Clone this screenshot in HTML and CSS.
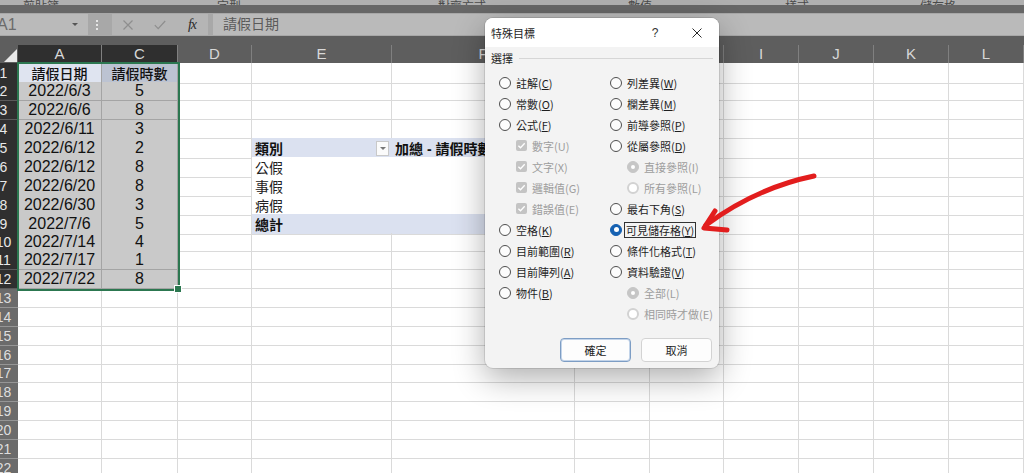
FILE: index.html
```html
<!DOCTYPE html>
<html lang="zh-Hant">
<head>
<meta charset="utf-8">
<title>特殊目標</title>
<link rel="stylesheet" href="styles.css">
</head>
<body>
<div class="app">
  <div class="ribbon-tail">
    <span></span><span>剪貼簿</span><span>字型</span><span>對齊方式</span><span>數值</span><span>樣式</span><span>儲存格</span>
  </div>
  <div class="ribbon-dark"></div>
  <div class="fbar">
    <div class="namebox"><span class="ref">A1</span><span class="dd"></span></div>
    <div class="grip"><i></i><i></i><i></i></div>
    <div class="fbtns">
      <span><svg width="10" height="10" viewBox="0 0 10 10"><path d="M0.5 0.5L9.5 9.5M9.5 0.5L0.5 9.5" stroke="#8e8e8e" stroke-width="1.2" fill="none"/></svg></span>
      <span><svg width="12" height="10" viewBox="0 0 12 10"><path d="M0.8 5.2L4.2 8.6L11.2 1" stroke="#8e8e8e" stroke-width="1.2" fill="none"/></svg></span>
      <span class="fx">fx</span>
    </div>
    <div class="finput">請假日期</div>
  </div>
  <div class="colhead">
    <div class="h corner"><div class="tri"></div></div>
    <div class="h hs">A</div><div class="h hs">C</div><div class="h">D</div><div class="h">E</div><div class="h">F</div><div class="h">G</div><div class="h">H</div><div class="h">I</div><div class="h">J</div><div class="h">K</div><div class="h">L</div>
  </div>
  <div class="sheet">
    <div class="row"><div class="rh rs">1</div><div class="c a1">請假日期</div><div class="c c1">請假時數</div><div class="c"></div><div class="c"></div><div class="c"></div><div class="c"></div><div class="c"></div><div class="c"></div><div class="c"></div><div class="c"></div><div class="c"></div></div>
    <div class="row"><div class="rh rs">2</div><div class="c sel num">2022/6/3</div><div class="c sel num">5</div><div class="c"></div><div class="c"></div><div class="c"></div><div class="c"></div><div class="c"></div><div class="c"></div><div class="c"></div><div class="c"></div><div class="c"></div></div>
    <div class="row"><div class="rh rs">3</div><div class="c sel num">2022/6/6</div><div class="c sel num">8</div><div class="c"></div><div class="c"></div><div class="c"></div><div class="c"></div><div class="c"></div><div class="c"></div><div class="c"></div><div class="c"></div><div class="c"></div></div>
    <div class="row"><div class="rh rs">4</div><div class="c sel num">2022/6/11</div><div class="c sel num">3</div><div class="c"></div><div class="c"></div><div class="c"></div><div class="c"></div><div class="c"></div><div class="c"></div><div class="c"></div><div class="c"></div><div class="c"></div></div>
    <div class="row"><div class="rh rs">5</div><div class="c sel num">2022/6/12</div><div class="c sel num">2</div><div class="c"></div><div class="c pvh pvh-e"><span>類別</span><span class="ddbtn"><span class="ddtri"></span></span></div><div class="c pvh">加總 - 請假時數</div><div class="c"></div><div class="c"></div><div class="c"></div><div class="c"></div><div class="c"></div><div class="c"></div></div>
    <div class="row"><div class="rh rs">6</div><div class="c sel num">2022/6/12</div><div class="c sel num">8</div><div class="c"></div><div class="c pv">公假</div><div class="c pv"></div><div class="c"></div><div class="c"></div><div class="c"></div><div class="c"></div><div class="c"></div><div class="c"></div></div>
    <div class="row"><div class="rh rs">7</div><div class="c sel num">2022/6/20</div><div class="c sel num">8</div><div class="c"></div><div class="c pv">事假</div><div class="c pv"></div><div class="c"></div><div class="c"></div><div class="c"></div><div class="c"></div><div class="c"></div><div class="c"></div></div>
    <div class="row"><div class="rh rs">8</div><div class="c sel num">2022/6/30</div><div class="c sel num">3</div><div class="c"></div><div class="c pv pv-last">病假</div><div class="c pv pv-last"></div><div class="c"></div><div class="c"></div><div class="c"></div><div class="c"></div><div class="c"></div><div class="c"></div></div>
    <div class="row"><div class="rh rs">9</div><div class="c sel num">2022/7/6</div><div class="c sel num">5</div><div class="c"></div><div class="c pvt">總計</div><div class="c pvt"></div><div class="c"></div><div class="c"></div><div class="c"></div><div class="c"></div><div class="c"></div><div class="c"></div></div>
    <div class="row"><div class="rh rs">10</div><div class="c sel num">2022/7/14</div><div class="c sel num">4</div><div class="c"></div><div class="c"></div><div class="c"></div><div class="c"></div><div class="c"></div><div class="c"></div><div class="c"></div><div class="c"></div><div class="c"></div></div>
    <div class="row"><div class="rh rs">11</div><div class="c sel num">2022/7/17</div><div class="c sel num">1</div><div class="c"></div><div class="c"></div><div class="c"></div><div class="c"></div><div class="c"></div><div class="c"></div><div class="c"></div><div class="c"></div><div class="c"></div></div>
    <div class="row"><div class="rh rs">12</div><div class="c sel num">2022/7/22</div><div class="c sel num">8</div><div class="c"></div><div class="c"></div><div class="c"></div><div class="c"></div><div class="c"></div><div class="c"></div><div class="c"></div><div class="c"></div><div class="c"></div></div>
    <div class="row"><div class="rh">13</div><div class="c"></div><div class="c"></div><div class="c"></div><div class="c"></div><div class="c"></div><div class="c"></div><div class="c"></div><div class="c"></div><div class="c"></div><div class="c"></div><div class="c"></div></div>
    <div class="row"><div class="rh">14</div><div class="c"></div><div class="c"></div><div class="c"></div><div class="c"></div><div class="c"></div><div class="c"></div><div class="c"></div><div class="c"></div><div class="c"></div><div class="c"></div><div class="c"></div></div>
    <div class="row"><div class="rh">15</div><div class="c"></div><div class="c"></div><div class="c"></div><div class="c"></div><div class="c"></div><div class="c"></div><div class="c"></div><div class="c"></div><div class="c"></div><div class="c"></div><div class="c"></div></div>
    <div class="row"><div class="rh">16</div><div class="c"></div><div class="c"></div><div class="c"></div><div class="c"></div><div class="c"></div><div class="c"></div><div class="c"></div><div class="c"></div><div class="c"></div><div class="c"></div><div class="c"></div></div>
    <div class="row"><div class="rh">17</div><div class="c"></div><div class="c"></div><div class="c"></div><div class="c"></div><div class="c"></div><div class="c"></div><div class="c"></div><div class="c"></div><div class="c"></div><div class="c"></div><div class="c"></div></div>
    <div class="row"><div class="rh">18</div><div class="c"></div><div class="c"></div><div class="c"></div><div class="c"></div><div class="c"></div><div class="c"></div><div class="c"></div><div class="c"></div><div class="c"></div><div class="c"></div><div class="c"></div></div>
    <div class="row"><div class="rh">19</div><div class="c"></div><div class="c"></div><div class="c"></div><div class="c"></div><div class="c"></div><div class="c"></div><div class="c"></div><div class="c"></div><div class="c"></div><div class="c"></div><div class="c"></div></div>
    <div class="row"><div class="rh">20</div><div class="c"></div><div class="c"></div><div class="c"></div><div class="c"></div><div class="c"></div><div class="c"></div><div class="c"></div><div class="c"></div><div class="c"></div><div class="c"></div><div class="c"></div></div>
    <div class="row"><div class="rh">21</div><div class="c"></div><div class="c"></div><div class="c"></div><div class="c"></div><div class="c"></div><div class="c"></div><div class="c"></div><div class="c"></div><div class="c"></div><div class="c"></div><div class="c"></div></div>
    <div class="row"><div class="rh">22</div><div class="c"></div><div class="c"></div><div class="c"></div><div class="c"></div><div class="c"></div><div class="c"></div><div class="c"></div><div class="c"></div><div class="c"></div><div class="c"></div><div class="c"></div></div>
  </div>
</div>

<div class="selection"></div>

<div class="dialog">
  <div class="dlg-title">
    <span class="t">特殊目標</span>
    <span class="help">?</span>
    <span class="close"><svg width="10" height="10" viewBox="0 0 10 10"><path d="M0.5 0.5L9.5 9.5M9.5 0.5L0.5 9.5" stroke="#2a2a2a" stroke-width="1" fill="none"/></svg></span>
  </div>
  <div class="legend"><span>選擇</span><span class="line"></span></div>
  <div class="opts">
    <div class="opt"><span class="radio"></span><span>註解(<u>C</u>)</span></div>
    <div class="opt"><span class="radio"></span><span>列差異(<u>W</u>)</span></div>

    <div class="opt"><span class="radio"></span><span>常數(<u>O</u>)</span></div>
    <div class="opt"><span class="radio"></span><span>欄差異(<u>M</u>)</span></div>

    <div class="opt"><span class="radio"></span><span>公式(<u>F</u>)</span></div>
    <div class="opt"><span class="radio"></span><span>前導參照(<u>P</u>)</span></div>

    <div class="opt ind dis"><span class="chk"><svg width="11" height="11" viewBox="0 0 11 11"><path d="M2.4 5.8L4.5 7.8L8.7 3.3" fill="none" stroke="#fff" stroke-width="1.3"/></svg></span><span>數字(U)</span></div>
    <div class="opt"><span class="radio"></span><span>從屬參照(<u>D</u>)</span></div>

    <div class="opt ind dis"><span class="chk"><svg width="11" height="11" viewBox="0 0 11 11"><path d="M2.4 5.8L4.5 7.8L8.7 3.3" fill="none" stroke="#fff" stroke-width="1.3"/></svg></span><span>文字(X)</span></div>
    <div class="opt ind dis"><span class="radio don"></span><span>直接參照(I)</span></div>

    <div class="opt ind dis"><span class="chk"><svg width="11" height="11" viewBox="0 0 11 11"><path d="M2.4 5.8L4.5 7.8L8.7 3.3" fill="none" stroke="#fff" stroke-width="1.3"/></svg></span><span>邏輯值(G)</span></div>
    <div class="opt ind dis"><span class="radio doff"></span><span>所有參照(L)</span></div>

    <div class="opt ind dis"><span class="chk"><svg width="11" height="11" viewBox="0 0 11 11"><path d="M2.4 5.8L4.5 7.8L8.7 3.3" fill="none" stroke="#fff" stroke-width="1.3"/></svg></span><span>錯誤值(E)</span></div>
    <div class="opt"><span class="radio"></span><span>最右下角(<u>S</u>)</span></div>

    <div class="opt"><span class="radio"></span><span>空格(<u>K</u>)</span></div>
    <div class="opt"><span class="radio on"></span><span class="focus">可見儲存格(<u>Y</u>)</span></div>

    <div class="opt"><span class="radio"></span><span>目前範圍(<u>R</u>)</span></div>
    <div class="opt"><span class="radio"></span><span>條件化格式(<u>T</u>)</span></div>

    <div class="opt"><span class="radio"></span><span>目前陣列(<u>A</u>)</span></div>
    <div class="opt"><span class="radio"></span><span>資料驗證(<u>V</u>)</span></div>

    <div class="opt"><span class="radio"></span><span>物件(<u>B</u>)</span></div>
    <div class="opt ind dis"><span class="radio don"></span><span>全部(L)</span></div>

    <div class="opt"></div>
    <div class="opt ind dis"><span class="radio doff"></span><span>相同時才做(E)</span></div>
  </div>
  <div class="btns">
    <div class="btn def">確定</div>
    <div class="btn">取消</div>
  </div>
</div>

<svg class="annot" width="1024" height="473" viewBox="0 0 1024 473">
  <path d="M814 176 Q756 188 706 225" fill="none" stroke="#e21d1d" stroke-width="5" stroke-linecap="round"/>
  <path d="M715 211 L704 228 L727 230" fill="none" stroke="#e21d1d" stroke-width="5" stroke-linecap="round" stroke-linejoin="round"/>
</svg>
</body>
</html>
```
FILE: styles.css
```css
* { box-sizing: border-box; }
html, body { margin: 0; padding: 0; }
body {
  width: 1024px;
  height: 473px;
  overflow: hidden;
  position: relative;
  background: #fff;
  font-family: "Liberation Sans", "Noto Sans CJK TC", sans-serif;
  color: #111;
}
.app { margin-left: -11px; width: 1035px; }

/* ribbon remnants */
.ribbon-tail {
  height: 5px;
  background: #b0b0b0;
  overflow: hidden;
  display: grid;
  grid-template-columns: 34px 194px 221px 190px 157px 135px 1fr;
  align-items: end;
}
.ribbon-tail span {
  display: block;
  font: 12px/12px "Noto Sans CJK TC", sans-serif;
  color: #4a4a4a;
  margin-bottom: -5px;
  white-space: nowrap;
}
.ribbon-dark { height: 8px; background: #676767; }

/* formula bar */
.fbar {
  height: 23px;
  background: #a8a8a8;
  display: flex;
  align-items: flex-start;
  padding-top: 1px;
}
.namebox {
  width: 99px;
  height: 21px;
  background: #bababa;
  display: flex;
  align-items: center;
  justify-content: space-between;
  padding: 0 10px 0 8px;
}
.namebox .ref { font-size: 16px; color: #6b6b6b; }
.namebox .dd {
  width: 0; height: 0;
  border-left: 3px solid transparent;
  border-right: 3px solid transparent;
  border-top: 3px solid #555;
}
.grip {
  width: 24px;
  height: 21px;
  display: flex;
  flex-direction: column;
  align-items: flex-start;
  justify-content: center;
  gap: 2px;
  padding-left: 8px;
}
.grip i { display: block; width: 2px; height: 2px; background: #e6e6e6; }
.fbtns {
  width: 96px;
  height: 21px;
  background: #b5b5b5;
  display: grid;
  grid-template-columns: 32px 32px 32px;
  align-items: center;
  justify-items: center;
}
.fbtns span { display: flex; align-items: center; }
.fbtns .fx {
  font-family: "Liberation Serif", serif;
  font-style: italic;
  font-size: 14px;
  color: #2a2a2a;
  letter-spacing: -1px;
}
.finput {
  flex: 1;
  height: 21px;
  margin-left: 5px;
  background: #bababa;
  padding-left: 10px;
  font-size: 14px;
  line-height: 21px;
  color: #5a5a5a;
}

/* column headers */
.colhead {
  height: 27px;
  background: #5e5e5e;
  padding-top: 9px;
  display: grid;
  grid-template-columns: 29px 84px 76px 74px 140px 183px 75px 74px 75px 75px 75px 75px;
}
.h {
  height: 18px;
  border-right: 1px solid #808080;
  text-align: center;
  font-size: 15px;
  line-height: 18px;
  color: #d8d8d8;
}
.h.hs { background: #2f2f2f; }
.corner {
  display: flex;
  justify-content: flex-end;
  align-items: flex-end;
  padding: 0 1px 1px 0;
  border-right: none;
}
.corner .tri {
  width: 13px;
  height: 13px;
  background: #e9e9e9;
  clip-path: polygon(100% 0, 100% 100%, 0 100%);
}

/* sheet grid */
.row {
  display: grid;
  grid-template-columns: 29px 84px 76px 74px 140px 183px 75px 74px 75px 75px 75px 75px;
  height: 18.85px;
}
.rh {
  background: #6b6b6b;
  color: #dedede;
  font-size: 14px;
  display: flex;
  align-items: center;
  justify-content: center;
  border-bottom: 1px solid #959595;
}
.rh.rs { background: #2f2f2f; border-bottom-color: #5a5a5a; color: #e8e8e8; }
.c {
  border-right: 1px solid #dadada;
  border-bottom: 1px solid #dadada;
  white-space: nowrap;
  display: flex;
  align-items: center;
  min-width: 0;
}
.num { justify-content: center; font-size: 16px; color: #111; }
.sel { background: #c9c9c9; border-color: #a4a4a4; }
.a1 {
  background: #dfe4f0;
  border-color: #a4a4a4;
  justify-content: center;
  font-size: 14px;
  font-weight: 500;
}
.c1 {
  background: #bcc3d2;
  border-color: #a4a4a4;
  justify-content: center;
  font-size: 14px;
  font-weight: 500;
}

/* pivot table */
.pvh {
  background: #dbe1f0;
  border-right-color: #dbe1f0;
  border-bottom: 1px solid #9fb0d4;
  font-weight: bold;
  font-size: 14px;
  padding-left: 3px;
}
.pvh-e { justify-content: space-between; padding-right: 2px; }
.ddbtn {
  width: 13px;
  height: 15px;
  background: #fbfbfb;
  border: 1px solid #c9c9c9;
  display: flex;
  align-items: center;
  justify-content: center;
}
.ddtri {
  width: 0; height: 0;
  border-left: 3px solid transparent;
  border-right: 3px solid transparent;
  border-top: 3px solid #777;
}
.pv {
  background: #fff;
  border-right-color: #fff;
  border-bottom-color: #fff;
  font-size: 14px;
  padding-left: 3px;
  color: #222;
}
.pv.pv-last { border-bottom-color: #9fb0d4; }
.pvt {
  background: #dbe1f0;
  border-right-color: #dbe1f0;
  font-weight: bold;
  font-size: 14px;
  padding-left: 3px;
}

/* selection overlay */
.selection {
  position: absolute;
  left: 17px;
  top: 62px;
  width: 163px;
  height: 229px;
  border: 2px solid #2c7750;
}
.selection::after {
  content: "";
  position: absolute;
  right: -4px;
  bottom: -4px;
  width: 6px;
  height: 6px;
  background: #2c7750;
  border: 1px solid #fff;
}

/* dialog */
.dialog {
  position: absolute;
  left: 485px;
  top: 18px;
  width: 234px;
  height: 350px;
  background: #f3f3f3;
  border-radius: 8px;
  box-shadow: 0 0 0 1px rgba(0,0,0,0.10), 0 10px 32px rgba(0,0,0,0.32);
  overflow: hidden;
  font-family: "Noto Sans CJK TC", "Liberation Sans", sans-serif;
  font-size: 11px;
  color: #1e1e1e;
  display: flex;
  flex-direction: column;
}
.dlg-title {
  height: 29px;
  flex: none;
  background: #fff;
  display: flex;
  align-items: center;
  padding-left: 6px;
}
.dlg-title .t { flex: 1; }
.help {
  width: 20px;
  text-align: center;
  margin-right: 10px;
  font-family: "Liberation Sans", sans-serif;
  font-size: 12px;
  color: #333;
}
.close { width: 44px; display: flex; justify-content: center; }
.legend {
  display: flex;
  align-items: center;
  height: 16px;
  margin-top: 3px;
  padding: 0 6px;
}
.legend .line { flex: 1; height: 1px; background: #d6d6d6; margin-left: 6px; }
.opts {
  display: grid;
  grid-template-columns: 111px 1fr;
  grid-auto-rows: 21px;
  margin-top: 6px;
  padding-left: 14px;
}
.opt {
  display: flex;
  align-items: center;
  gap: 5px;
  white-space: nowrap;
}
.opt u { text-underline-offset: 1px; }
.opt.ind { padding-left: 17px; }
.opt.dis { color: #9d9d9d; }
.radio {
  flex: none;
  width: 12px;
  height: 12px;
  border-radius: 50%;
  border: 1px solid #4e4e4e;
  background: #fcfcfc;
  display: flex;
  align-items: center;
  justify-content: center;
}
.radio.on { background: #1561b2; border-color: #1561b2; }
.radio.on::after {
  content: "";
  width: 5px;
  height: 5px;
  border-radius: 50%;
  background: #fff;
}
.radio.don { background: #c6c6c6; border-color: #c6c6c6; }
.radio.don::after {
  content: "";
  width: 4px;
  height: 4px;
  border-radius: 50%;
  background: #fff;
}
.radio.doff { border: 2px solid #d2d2d2; background: #fff; }
.chk {
  flex: none;
  width: 11px;
  height: 11px;
  border-radius: 2px;
  background: #c4c4c4;
  display: flex;
}
.focus {
  border: 1px solid #333;
  padding: 0 1px;
  margin-left: -3px;
  line-height: 14px;
}
.btns {
  display: flex;
  justify-content: flex-end;
  gap: 10px;
  padding-right: 7px;
  margin-top: 14px;
}
.btn {
  width: 71px;
  height: 24px;
  border-radius: 4px;
  background: #fdfdfd;
  border: 1px solid #d3d3d3;
  display: flex;
  align-items: center;
  justify-content: center;
  color: #222;
}
.btn.def { border-color: #7d9dc4; box-shadow: inset 0 0 0 1px #c3d4e9; }

/* annotation */
.annot {
  position: absolute;
  left: 0;
  top: 0;
  pointer-events: none;
}
```
